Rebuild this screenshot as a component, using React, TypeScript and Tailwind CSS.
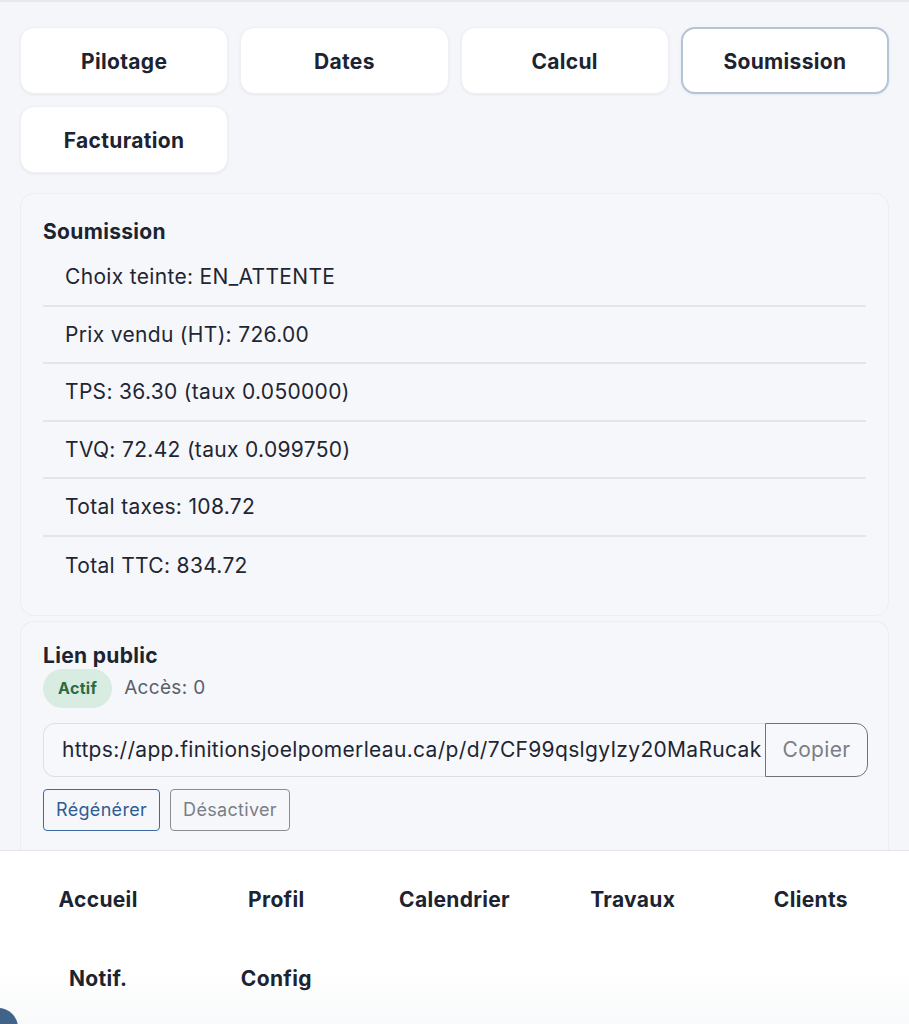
import { useState } from 'react';

const TABS = ['Pilotage', 'Dates', 'Calcul', 'Soumission', 'Facturation'];

const LINES = [
  'Choix teinte: EN_ATTENTE',
  'Prix vendu (HT): 726.00',
  'TPS: 36.30 (taux 0.050000)',
  'TVQ: 72.42 (taux 0.099750)',
  'Total taxes: 108.72',
  'Total TTC: 834.72',
];

const NAV = ['Accueil', 'Profil', 'Calendrier', 'Travaux', 'Clients', 'Notif.', 'Config'];

const PUBLIC_URL = 'https://app.finitionsjoelpomerleau.ca/p/d/7CF99qslgyIzy20MaRucak';

export default function App() {
  const [activeTab, setActiveTab] = useState('Soumission');

  return (
    <div className="relative flex min-h-screen flex-col overflow-hidden border-t-2 border-[#e6e8ec] bg-[#f4f6f9] font-['Inter',sans-serif] tracking-[0.02em] text-[#1c2331]">
      <div className="flex-1 px-5 pt-[25px]">
        {/* onglets du dossier */}
        <div className="grid grid-cols-4 gap-3">
          {TABS.map(tab => (
            <button
              type="button"
              key={tab}
              onClick={() => setActiveTab(tab)}
              className={`flex h-[67px] items-center justify-center rounded-[14px] bg-white pt-[2px] text-[21px] font-bold shadow-[0_1px_3px_rgba(15,23,42,0.06)] ${
                tab === activeTab ? 'border-2 border-[#b3c3d8]' : 'border border-[#eef0f3]'
              }`}>
              {tab}
            </button>
          ))}
        </div>

        <section className="mt-5 rounded-[14px] border border-[#eceef2] bg-[#f6f7fa] px-[22px] pt-[24px] pb-[20px]">
          <h2 className="text-[21px] leading-[28px] font-bold">Soumission</h2>
          <ul className="mt-[3px]">
            {LINES.map((line, i) => (
              <li
                key={line}
                className={`flex h-[57.6px] items-center px-[22px] text-[21px] text-[#1f2633] ${
                  i < LINES.length - 1 ? 'border-b-2 border-[#e3e5e9]' : ''
                }`}>
                {line}
              </li>
            ))}
          </ul>
        </section>

        <section className="mt-[5px] rounded-t-[14px] border border-b-0 border-[#eceef2] bg-[#f6f7fa] pt-[20px] pr-[20px] pb-[19px] pl-[22px]">
          <h2 className="text-[21px] leading-[28px] font-bold">Lien public</h2>
          <div className="mt-[-1px] flex items-center gap-3">
            <span className="flex h-[39px] items-center rounded-full bg-[#d8ece1] px-[15px] text-[16px] font-bold text-[#2c6a46]">
              Actif
            </span>
            <span className="text-[19px] text-[#5a606b]">Accès: 0</span>
          </div>

          <div className="mt-[15px] flex h-[54px]">
            <div className="flex min-w-0 flex-1 items-center overflow-hidden rounded-l-[12px] border border-r-0 border-[#dcdfe4] bg-[#f7f8fb] pl-[18px]">
              <span className="whitespace-nowrap text-[21px] text-[#1f2633]">{PUBLIC_URL}</span>
            </div>
            <button
              type="button"
              className="w-[103px] rounded-r-[12px] border border-[#6f737a] bg-[#f7f8fb] text-[21px] text-[#7a7e86]">
              Copier
            </button>
          </div>

          <div className="mt-3 flex gap-[10px]">
            <button
              type="button"
              className="h-[42px] rounded-[4px] border border-[#3c6aa2] px-3 text-[18px] text-[#2f5d93]">
              Régénérer
            </button>
            <button
              type="button"
              className="h-[42px] rounded-[4px] border border-[#8a8d93] px-3 text-[18px] text-[#7a7e86]">
              Désactiver
            </button>
          </div>
        </section>
      </div>

      {/* navigation du bas */}
      <nav className="grid h-[174px] grid-cols-5 content-start border-t border-[#e3e5e9] bg-gradient-to-b from-white from-70% to-[#f8f9fa] px-[9px] pt-[9px]">
        {NAV.map(item => (
          <button
            type="button"
            key={item}
            className="flex h-[79px] items-center justify-center text-[21px] font-bold text-[#1c2331]">
            {item}
          </button>
        ))}
      </nav>

      <div className="pointer-events-none absolute -bottom-[24px] -left-[22px] h-[40px] w-[40px] rounded-full bg-[#3f6389]" />
    </div>
  );
}
